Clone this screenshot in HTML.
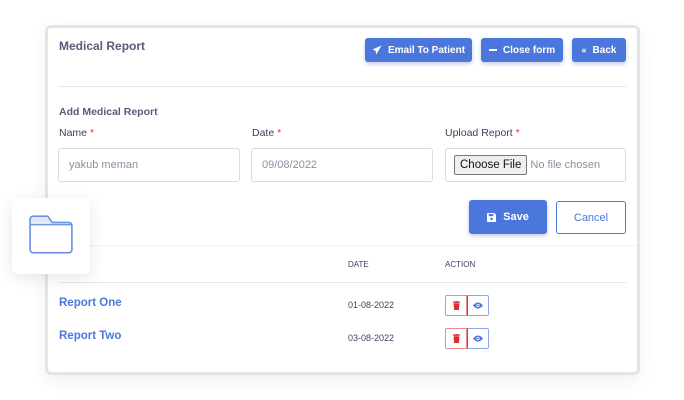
<!DOCTYPE html>
<html><head><meta charset="utf-8"><style>
*{box-sizing:border-box;margin:0;padding:0}
body{width:684px;height:400px;background:#fff;font-family:"Liberation Sans",sans-serif;position:relative;overflow:hidden;color:#3a4160}
.card{position:absolute;left:45px;top:25px;width:595px;height:350px;border:3px solid #e3e4ea;border-radius:6px;background:#fff;box-shadow:0 6px 18px rgba(0,0,0,.06)}
.abs{position:absolute}
.btn{position:absolute;background:#4b77dd;color:#fff;font-size:10px;font-weight:bold;border-radius:3px;display:flex;align-items:center;justify-content:center;gap:6px;box-shadow:0 2px 4px rgba(60,90,180,.3)}
.lbl{font-size:10.5px;color:#3a4160}
.lbl b{color:#e0333a;font-weight:normal}
.inp{position:absolute;height:34px;border:1px solid #d8dbe2;border-radius:3px;font-size:11px;color:#8a90a0;display:flex;align-items:center;padding-left:10px}
.th{font-size:8px;color:#3a4160}
.link{font-size:11.5px;color:#4b77dd;font-weight:bold}
.dt{font-size:9px;color:#3a4160}
.act{position:absolute;width:44px;height:21px;display:flex}
.act .d{width:22px;height:21px;border:1px solid #ef8a8a;border-radius:2px 0 0 2px;display:flex;align-items:center;justify-content:center}
.act .e{width:22px;height:21px;border:1px solid #8aa6ee;border-left:1px solid #c04040;border-radius:0 2px 2px 0;display:flex;align-items:center;justify-content:center}
</style></head><body>
<div class="card"></div>
<div class="abs" style="left:59px;top:39px;font-size:12px;color:#3a4160;font-weight:bold;opacity:.85">Medical Report</div>
<div class="btn" style="left:365px;top:38px;width:107px;height:24px"><svg width="10" height="10" viewBox="0 0 10 10"><path d="M9.5 0.5L0.5 4.5L3.5 5.8L4.2 9.5L6 6.5Z" fill="#fff"/></svg>Email To Patient</div>
<div class="btn" style="left:481px;top:38px;width:82px;height:24px"><span style="display:inline-block;width:8px;height:2px;background:#fff"></span>Close form</div>
<div class="btn" style="left:572px;top:38px;width:54px;height:24px"><span style="font-size:9px">«</span>Back</div>
<div class="abs" style="left:58px;top:86px;width:568px;height:1px;background:#e6e8ee"></div>
<div class="abs" style="left:59px;top:106px;font-size:10.5px;font-weight:bold;opacity:.85">Add Medical Report</div>
<div class="abs lbl" style="left:59px;top:127px">Name <b>*</b></div>
<div class="abs lbl" style="left:252px;top:127px">Date <b>*</b></div>
<div class="abs lbl" style="left:445px;top:127px">Upload Report <b>*</b></div>
<div class="inp" style="left:58px;top:148px;width:182px">yakub meman</div>
<div class="inp" style="left:251px;top:148px;width:182px">09/08/2022</div>
<div class="inp" style="left:445px;top:148px;width:181px;padding-left:8px"><span style="border:1px solid #767676;background:#efefef;color:#111;padding:3px 5px;font-size:11.5px;border-radius:2px">Choose File</span><span style="margin-left:3px;font-size:11px">No file chosen</span></div>
<div class="btn" style="left:469px;top:200px;width:78px;height:34px;font-size:11px;gap:7px"><svg width="9" height="9" viewBox="0 0 10 10"><path d="M0 1a1 1 0 0 1 1-1h7l2 2v7a1 1 0 0 1-1 1H1a1 1 0 0 1-1-1z" fill="#fff"/><rect x="2" y="1" width="5" height="2.5" fill="#4b77dd"/><circle cx="5" cy="6.5" r="1.4" fill="#4b77dd"/></svg>Save</div>
<div class="abs" style="left:556px;top:201px;width:70px;height:33px;border:1px solid #4b77dd;border-radius:3px;color:#4b77dd;font-size:11px;display:flex;align-items:center;justify-content:center">Cancel</div>
<div class="abs" style="left:48px;top:245px;width:589px;height:1px;background:#f0f1f4"></div>
<div class="abs th" style="left:348px;top:260px">DATE</div>
<div class="abs th" style="left:445px;top:260px">ACTION</div>
<div class="abs" style="left:58px;top:282px;width:568px;height:1px;background:#e6e8ee"></div>
<div class="abs link" style="left:59px;top:297px">Report One</div>
<div class="abs dt" style="left:348px;top:300px">01-08-2022</div>
<div class="abs link" style="left:59px;top:330px">Report Two</div>
<div class="abs dt" style="left:348px;top:333px">03-08-2022</div>
<div class="act" style="left:445px;top:295px"><div class="d"><svg width="7" height="9" viewBox="0 0 7 9"><rect x="0" y="0.5" width="7" height="1.3" fill="#e02b2b"/><rect x="2.3" y="0" width="2.4" height="1" fill="#e02b2b"/><path d="M0.6 2.2h5.8l-0.5 6.8h-4.8z" fill="#e02b2b"/></svg></div><div class="e"><svg width="10" height="7" viewBox="0 0 10 7"><path d="M0 3.5Q5 -2.5 10 3.5Q5 9.5 0 3.5z" fill="#4b77dd"/><circle cx="5" cy="3.5" r="1.6" fill="#fff"/><circle cx="5" cy="3.5" r="0.9" fill="#4b77dd"/></svg></div></div>
<div class="act" style="left:445px;top:328px"><div class="d"><svg width="7" height="9" viewBox="0 0 7 9"><rect x="0" y="0.5" width="7" height="1.3" fill="#e02b2b"/><rect x="2.3" y="0" width="2.4" height="1" fill="#e02b2b"/><path d="M0.6 2.2h5.8l-0.5 6.8h-4.8z" fill="#e02b2b"/></svg></div><div class="e"><svg width="10" height="7" viewBox="0 0 10 7"><path d="M0 3.5Q5 -2.5 10 3.5Q5 9.5 0 3.5z" fill="#4b77dd"/><circle cx="5" cy="3.5" r="1.6" fill="#fff"/><circle cx="5" cy="3.5" r="0.9" fill="#4b77dd"/></svg></div></div>
<div class="abs" style="left:12px;top:198px;width:78px;height:76px;background:#fff;border-radius:6px;box-shadow:0 4px 16px rgba(0,0,0,.1)">
<svg style="position:absolute;left:16px;top:16px" width="46" height="42" viewBox="0 0 44 40"><path d="M2 8V5a3 3 0 0 1 3-3h14l4 6z" fill="#dfe6fa"/><path d="M2 34V5a3 3 0 0 1 3-3h14l4 6h16a3 3 0 0 1 3 3v23a3 3 0 0 1-3 3H5a3 3 0 0 1-3-3z" fill="none" stroke="#6f93e6" stroke-width="1.6" stroke-linejoin="round"/><path d="M2 10H42" stroke="#6f93e6" stroke-width="1.6"/></svg>
</div>
</body></html>
